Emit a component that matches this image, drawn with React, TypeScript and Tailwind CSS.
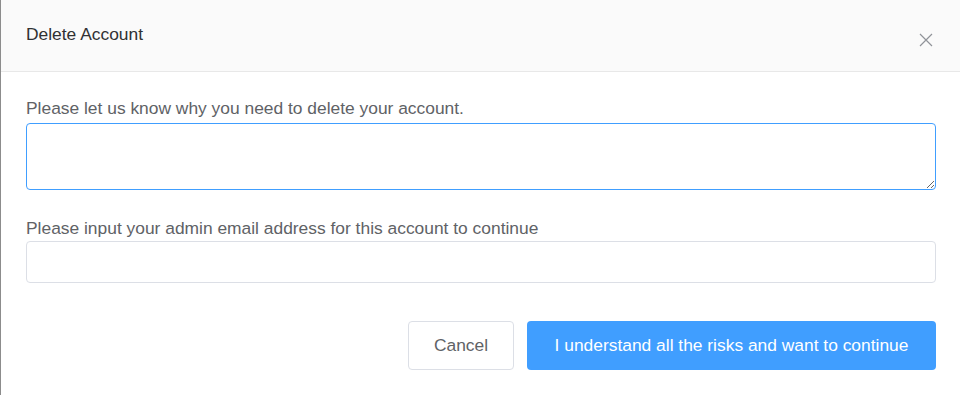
import React from 'react';

export default function App() {
  return (
    <div className="w-[960px] h-[395px] bg-white border-l border-[#8c8c8c] overflow-hidden" style={{ fontFamily: '"Liberation Sans", Arial, sans-serif' }}>
      <div className="h-[72px] bg-[#fafafa] border-b border-[#e8e8e8] flex items-center justify-between pl-[25px] pr-[27px]">
        <span className="text-[17.4px] text-[#303133] leading-6 -mt-[3px]">Delete Account</span>
        <button className="w-[14px] h-[14px] mt-[9px] text-[#909399]">
          <svg viewBox="0 0 14 14" width="14" height="14" fill="none" stroke="currentColor" strokeWidth="1.2">
            <path d="M1 1L13 13M13 1L1 13" />
          </svg>
        </button>
      </div>
      <div className="pl-[25px] pr-[24px] pt-6">
        <label className="block text-[17.4px] leading-6 text-[#606266] mb-[3px]">
          Please let us know why you need to delete your account.
        </label>
        <textarea className="block w-full h-[67px] rounded-[4px] border border-[#409eff] outline-none px-3 py-1 text-[14px]" />
        <label className="block text-[17.4px] leading-6 text-[#606266] mt-[26px] mb-px">
          Please input your admin email address for this account to continue
        </label>
        <input className="block w-full h-[42px] rounded-[4px] border border-[#dcdfe6] outline-none px-3 text-[14px]" />
        <div className="flex justify-end gap-[13px] mt-[38px]">
          <button className="w-[106px] h-[49px] rounded-[4px] border border-[#dcdfe6] bg-white text-[17.4px] text-[#606266]">
            Cancel
          </button>
          <button className="w-[409px] h-[49px] rounded-[4px] bg-[#409eff] text-[17.4px] text-white">
            I understand all the risks and want to continue
          </button>
        </div>
      </div>
    </div>
  );
}
